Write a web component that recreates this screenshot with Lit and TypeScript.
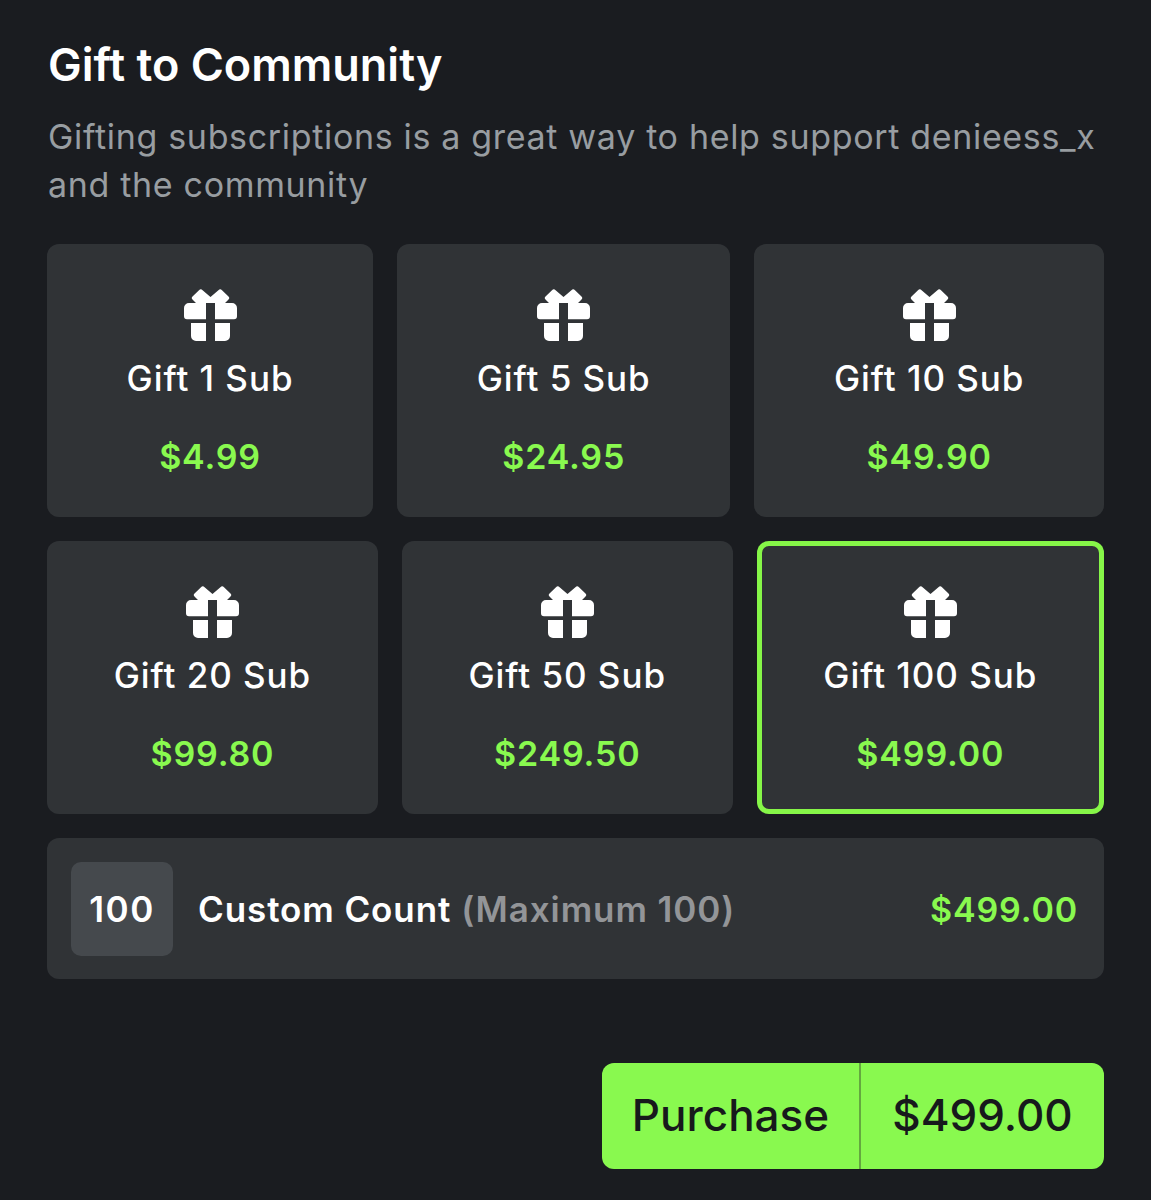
import { LitElement, html, css, svg } from "lit";
import { customElement } from "lit/decorators.js";

const gift = svg`<svg class="gift" viewBox="0 0 53 52" width="53" height="52" aria-hidden="true">
  <path fill="#fff" d="M8.500 7.500 15 1.200a2.600 2.600 0 0 1 3.600 0L26.500 8l7.900-6.800a2.600 2.600 0 0 1 3.600 0l6.500 6.300a2 2 0 0 1 0 2.900L41 14h7a5 5 0 0 1 5 5v8.200a3 3 0 0 1-3 3H31V14h-9v16.200H3a3 3 0 0 1-3-3V19a5 5 0 0 1 5-5h7l-3.500-3.600a2 2 0 0 1 0-2.900Z"/>
  <path fill="#fff" d="M7 34h15v18h-10a5 5 0 0 1-5-5ZM31 34h15v13a5 5 0 0 1-5 5H31Z"/>
</svg>`;

const rows = [
  [["Gift 1 Sub", "$4.99"], ["Gift 5 Sub", "$24.95"], ["Gift 10 Sub", "$49.90"]],
  [["Gift 20 Sub", "$99.80"], ["Gift 50 Sub", "$249.50"], ["Gift 100 Sub", "$499.00", true]],
];

@customElement("app-root")
export class AppRoot extends LitElement {
  static styles = css`
    :host {
      display: block;
      box-sizing: border-box;
      height: 1200px;
      background: #1a1c20;
      color: #fff;
      font-family: Inter, "Liberation Sans", sans-serif;
      padding: 40px 47px 0 47px;
      overflow: hidden;
    }
    h1 {
      margin: 0 0 0 1px;
      font-size: 45px;
      line-height: 50px;
      font-weight: 600;
    }
    .sub {
      margin: 23px 0 35px 1px;
      font-size: 34px;
      line-height: 48px;
      color: #989da1;
      letter-spacing: 0.67px;
      white-space: nowrap;
    }
    .row {
      display: flex;
      gap: 24px;
      margin-bottom: 24px;
    }
    .card {
      flex: 1 1 auto;
      box-sizing: border-box;
      height: 273px;
      background: #303336;
      border-radius: 12px;
      display: flex;
      flex-direction: column;
      align-items: center;
      padding-top: 45px;
    }
    .card.sel {
      box-shadow: inset 0 0 0 5px #86f648;
    }
    .gift { display: block; }
    .name {
      margin-top: 14px;
      font-size: 35px;
      line-height: 46px;
      font-weight: 500;
      letter-spacing: 0.95px;
    }
    .price {
      margin-top: 33px;
      font-size: 34px;
      line-height: 46px;
      font-weight: 600;
      color: #89f94f;
      letter-spacing: 0.85px;
    }
    .custom {
      height: 141px;
      box-sizing: border-box;
      background: #303336;
      border-radius: 12px;
      display: flex;
      align-items: center;
      padding: 0 26px 0 24px;
      font-size: 35px;
      font-weight: 600;
      letter-spacing: 0.9px;
    }
    .count {
      width: 102px;
      height: 94px;
      background: #45494d;
      border-radius: 10px;
      display: flex;
      align-items: center;
      justify-content: center;
      margin-right: 25px;
      letter-spacing: 1.5px;
    }
    .max { color: #939598; margin-left: 10px; }
    .total { margin-left: auto; color: #89f94f; font-size: 34px; letter-spacing: 0.85px; padding-top: 1px; }
    .actions {
      display: flex;
      justify-content: flex-end;
      margin-top: 84px;
    }
    .buy {
      display: flex;
      height: 106px;
      width: 502px;
      background: #89f94f;
      border-radius: 12px;
      color: #17191c;
      font-size: 44px;
      font-weight: 500;
      align-items: center;
    }
    .buy span { display: flex; align-items: center; justify-content: center; height: 100%; padding-bottom: 2px; box-sizing: border-box; }
    .label { width: 259px; border-right: 2px solid #64a83f; }
    .amt { flex: 1; }
  `;

  render() {
    return html`
      <h1>Gift to Community</h1>
      <p class="sub">Gifting subscriptions is a great way to help support denieess_x<br />and the community</p>
      ${rows.map(
        (r) => html`<div class="row">
          ${r.map(
            (c) => html`<div class="card ${c[2] ? "sel" : ""}">
              ${gift}
              <div class="name">${c[0]}</div>
              <div class="price">${c[1]}</div>
            </div>`
          )}
        </div>`
      )}
      <div class="custom">
        <div class="count">100</div>
        <div>Custom Count</div>
        <div class="max">(Maximum 100)</div>
        <div class="total">$499.00</div>
      </div>
      <div class="actions">
        <div class="buy"><span class="label">Purchase</span><span class="amt">$499.00</span></div>
      </div>
    `;
  }
}
